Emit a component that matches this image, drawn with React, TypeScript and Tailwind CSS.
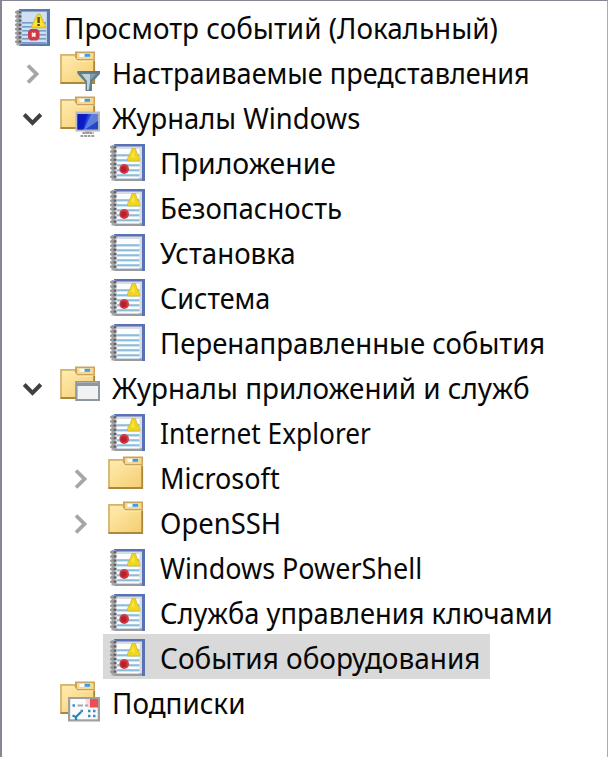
import React from "react";

type IconKind = "root" | "log" | "plainLog" | "folder" | "filter" | "monitor" | "window" | "calendar";
type Item = {
  label: string;
  icon: IconKind;
  level: 0 | 1 | 2;
  state?: "open" | "closed";
  selected?: boolean;
  fit: string;
};

const items: Item[] = [
  { label: "Просмотр событий (Локальный)", icon: "root", level: 0, fit: "scale-x-[0.943]" },
  { label: "Настраиваемые представления", icon: "filter", level: 1, state: "closed", fit: "scale-x-[0.917]" },
  { label: "Журналы Windows", icon: "monitor", level: 1, state: "open", fit: "scale-x-[0.929]" },
  { label: "Приложение", icon: "log", level: 2, fit: "scale-x-[0.962]" },
  { label: "Безопасность", icon: "log", level: 2, fit: "scale-x-[0.933]" },
  { label: "Установка", icon: "plainLog", level: 2, fit: "scale-x-[0.937]" },
  { label: "Система", icon: "log", level: 2, fit: "scale-x-[0.916]" },
  { label: "Перенаправленные события", icon: "plainLog", level: 2, fit: "scale-x-[0.934]" },
  { label: "Журналы приложений и служб", icon: "window", level: 1, state: "open", fit: "scale-x-[0.943]" },
  { label: "Internet Explorer", icon: "log", level: 2, fit: "scale-x-[0.89]" },
  { label: "Microsoft", icon: "folder", level: 2, state: "closed", fit: "scale-x-[0.915]" },
  { label: "OpenSSH", icon: "folder", level: 2, state: "closed", fit: "scale-x-[0.93]" },
  { label: "Windows PowerShell", icon: "log", level: 2, fit: "scale-x-[0.913]" },
  { label: "Служба управления ключами", icon: "log", level: 2, fit: "scale-x-[0.924]" },
  { label: "События оборудования", icon: "log", level: 2, selected: true, fit: "scale-x-[0.947]" },
  { label: "Подписки", icon: "calendar", level: 1, fit: "scale-x-[0.943]" },
];

function Notebook({ kind }: { kind: "root" | "log" | "plainLog" }) {
  const root = kind === "root";
  const rings = [7, 11.2, 15.4, 19.6, 23.8, 28, 32.2, 36.4];
  return (
    <g transform={root ? "translate(1 0)" : undefined}>
      <rect x="6" y="5" width="31" height="37" fill={root ? "#5b78b0" : "#5872b5"} />
      <rect x="6" y="39.5" width={root ? 31 : 28} height="2.5" fill={root ? "#6078aa" : "#999b9f"} />
      <rect x="7" y="7.5" width="27" height="32" fill={root ? "#b9cfeb" : "#d9dce1"} />
      <rect x="9" y={root ? 8 : 10} width={root ? 24 : 22.5} height={root ? 31 : 29.5} fill={root ? "#cfe0f2" : "#fbfdff"} />
      {(root ? [18, 22, 26, 30, 34, 38] : [15.2, 20.2, 25.2, 30.2, 35.2]).map((y) => (
        <rect key={y} x="9" y={y} width={root ? 24 : 22.5} height={root ? 1.6 : 2.2} fill={root ? "#789cc8" : "#8dbdda"} />
      ))}
      <rect x="3.5" y="6" width="4" height="35.5" fill="#a6a6a8" />
      {rings.map((y) => (
        <g key={y}>
          <rect x="2" y={y} width="6" height="2.6" rx="1" fill="#98989a" />
          <rect x="5.8" y={y + 0.2} width="2.6" height="2" fill="#5b5d62" />
        </g>
      ))}
      {kind !== "plainLog" && (
        <>
          <path
            d={root ? "M24.5 10 L27 10 L32.5 22 L32 24 H19 L18.5 22 Z" : "M24 9.5 H27.5 L28.5 13 L31.8 19.5 V22 H19.5 V19.5 L22.5 14 Z"}
            fill="#efd51d" stroke="#cdb836" strokeWidth="0.8"
          />
          <path d={root ? "M25.5 11 L20 22 H31 Z" : "M25.5 11 L23 18 L27 19 Z"} fill="#ffe844" opacity="0.8" />
          {root ? (
            <>
              <rect x="24.4" y="13" width="2.4" height="6" fill="#584d16" />
              <rect x="24.4" y="20" width="2.4" height="2" fill="#584d16" />
              <path d="M17.5 25 H24 L26.5 27.5 V34 L24 36.5 H17.5 L15 34 V27.5 Z" fill="#cf3942" />
              <path d="M19 29 L22.5 32.5 M22.5 29 L19 32.5" stroke="#fff0ed" strokeWidth="1.8" />
            </>
          ) : (
            <>
              <ellipse cx="16.2" cy="30" rx="4.8" ry="5" fill="#d23c45" />
              <ellipse cx="15.6" cy="30.2" rx="3" ry="3" fill="#b9202b" />
            </>
          )}
        </>
      )}
    </g>
  );
}

function Folder() {
  return (
    <g>
      <path d="M0.3 5 H15 V3 H34.7 V35 H0.3 Z" fill="#eecb7c" />
      <path d="M1 34.5 V5.8 H15" fill="none" stroke="#d4b36d" strokeWidth="1.5" />
      <rect x="15" y="2.5" width="20" height="9" fill="#c9a45f" />
      <rect x="17" y="4" width="16.5" height="6" fill="#f5d895" />
      <rect x="19.5" y="4.8" width="10.5" height="3" fill="#fff" />
      <rect x="24.5" y="4.8" width="5.5" height="3" fill="#3c9de8" />
      <path d="M2 7.5 H14 L17 12 H33 V33 H2 Z" fill="url(#folder-face)" />
      <path d="M2.5 8 H14 L17 12 H33" fill="none" stroke="#fff0b7" strokeWidth="1" />
      <path d="M0.5 34 H34.2 V12" fill="none" stroke="#aa893f" strokeWidth="1.8" />
    </g>
  );
}

function Overlay({ kind }: { kind: IconKind }) {
  if (kind === "filter")
    return (
      <g>
        <path d="M17.5 22.5 H40 V25 L32 33.5 V42 H25.5 V33.5 L17.5 25 Z" fill="#64808e" />
        <path d="M21.5 25 H30 V33 L28.7 41 H27 V32 Z" fill="#bdd3d9" />
        <path d="M30 25 H36 L30.5 31 Z" fill="#879fa9" />
        <path d="M17.5 23 H40" stroke="#617887" strokeWidth="2" />
      </g>
    );
  if (kind === "monitor")
    return (
      <g>
        <path d="M25 37 H31 V40 H25 Z" fill="#b8bac0" />
        <rect x="15.5" y="17.5" width="24.5" height="20" fill="#b8bac0" />
        <rect x="17.5" y="20" width="20.5" height="15.5" fill="url(#screen)" />
        <path d="M17.5 20 H28 L23 35.5 H17.5 Z" fill="#0a16bf" opacity="0.8" />
        <path d="M31 20 H38 V27 L25 35.5 H24 Z" fill="#91acee" opacity="0.55" />
        <path d="M22.5 39 H34 M20.5 42 H35" stroke="#9b9ca0" strokeWidth="1.8" strokeDasharray="2.8 0.8" />
      </g>
    );
  if (kind === "window")
    return (
      <g>
        <rect x="15.2" y="17" width="24.8" height="20" fill="#8f979f" />
        <rect x="17.5" y="22" width="20.5" height="13" fill="#f1f2f4" />
        <path d="M17 18.5 H38" stroke="#aab1b8" />
      </g>
    );
  if (kind === "calendar")
    return (
      <g>
        <rect x="8" y="18" width="32" height="24.5" fill="#a1a0a0" />
        <rect x="10.2" y="20" width="27.5" height="20.3" fill="#fafbfc" />
        <rect x="30" y="20" width="8" height="8.5" fill="#ef4d52" />
        <path d="M25 20 H30 V28.5 H27 Z" fill="#f8dadd" />
        <path d="M12.5 26.5 H15 M20.5 32 H23 M28 32 H30.5 M33 32 H35.5 M28 37 H30.5 M33 37 H35.5" stroke="#458bb9" strokeWidth="2.4" />
        <path d="M17.5 26.5 H23 M25 26.5 H28" stroke="#aaa2b7" strokeWidth="2" />
        <path d="M12.5 36.5 L16 38 L21 33 M16 37 V41" fill="none" stroke="#2387bb" strokeWidth="2.3" />
      </g>
    );
  return null;
}

function ItemIcon({ kind }: { kind: IconKind }) {
  return (
    <svg className="h-[45px] w-[52px] shrink-0" viewBox="0 0 52 45" aria-hidden="true">
      <defs>
        <linearGradient id="folder-face" x1="0" y1="0" x2="1" y2="1">
          <stop stopColor="#ffebae" />
          <stop offset="1" stopColor="#f5ce72" />
        </linearGradient>
        <linearGradient id="screen">
          <stop stopColor="#0519be" />
          <stop offset="0.4" stopColor="#2145dc" />
          <stop offset="1" stopColor="#2449b9" />
        </linearGradient>
      </defs>
      {kind === "root" || kind === "log" || kind === "plainLog" ? (
        <Notebook kind={kind} />
      ) : (
        <>
          <Folder />
          <Overlay kind={kind} />
        </>
      )}
    </svg>
  );
}

function Chevron({ state }: { state?: "open" | "closed" }) {
  return (
    <svg className="h-[45px] w-12 shrink-0" viewBox="0 0 48 45" aria-hidden="true">
      {state === "closed" && <path d="M16 16.5 L24.5 25 L16 33.5" fill="none" stroke="#a6a6a6" strokeWidth="3.8" />}
      {state === "open" && <path d="M12.2 20.5 L20.5 28.8 L28.8 20.5" fill="none" stroke="#404040" strokeWidth="4" />}
    </svg>
  );
}

function TreeRow({ item }: { item: Item }) {
  const indent = item.level === 2 ? "pl-[58px]" : "pl-[10px]";
  return (
    <div role="treeitem" aria-selected={!!item.selected} className={`flex h-[45px] ${indent}`}>
      {item.level > 0 && <Chevron state={item.state} />}
      <div className={item.selected ? "-ml-[5px] flex w-[387px] bg-[#d9d9d9] pl-[5px]" : "flex"}>
        <ItemIcon kind={item.icon} />
        <span className={`origin-left whitespace-nowrap text-[29.5px] leading-[47px] text-[#080808] ${item.fit}`}>{item.label}</span>
      </div>
    </div>
  );
}

export default function App() {
  return (
    <main role="tree" className="h-[757px] w-[608px] overflow-hidden border-t border-r border-l-2 border-t-[#858893] border-r-[#a8abb5] border-l-[#858893] bg-white pt-[3px] font-['Noto_Sans','Open_Sans',sans-serif]">
      {items.map((item) => <TreeRow key={item.label} item={item} />)}
    </main>
  );
}
